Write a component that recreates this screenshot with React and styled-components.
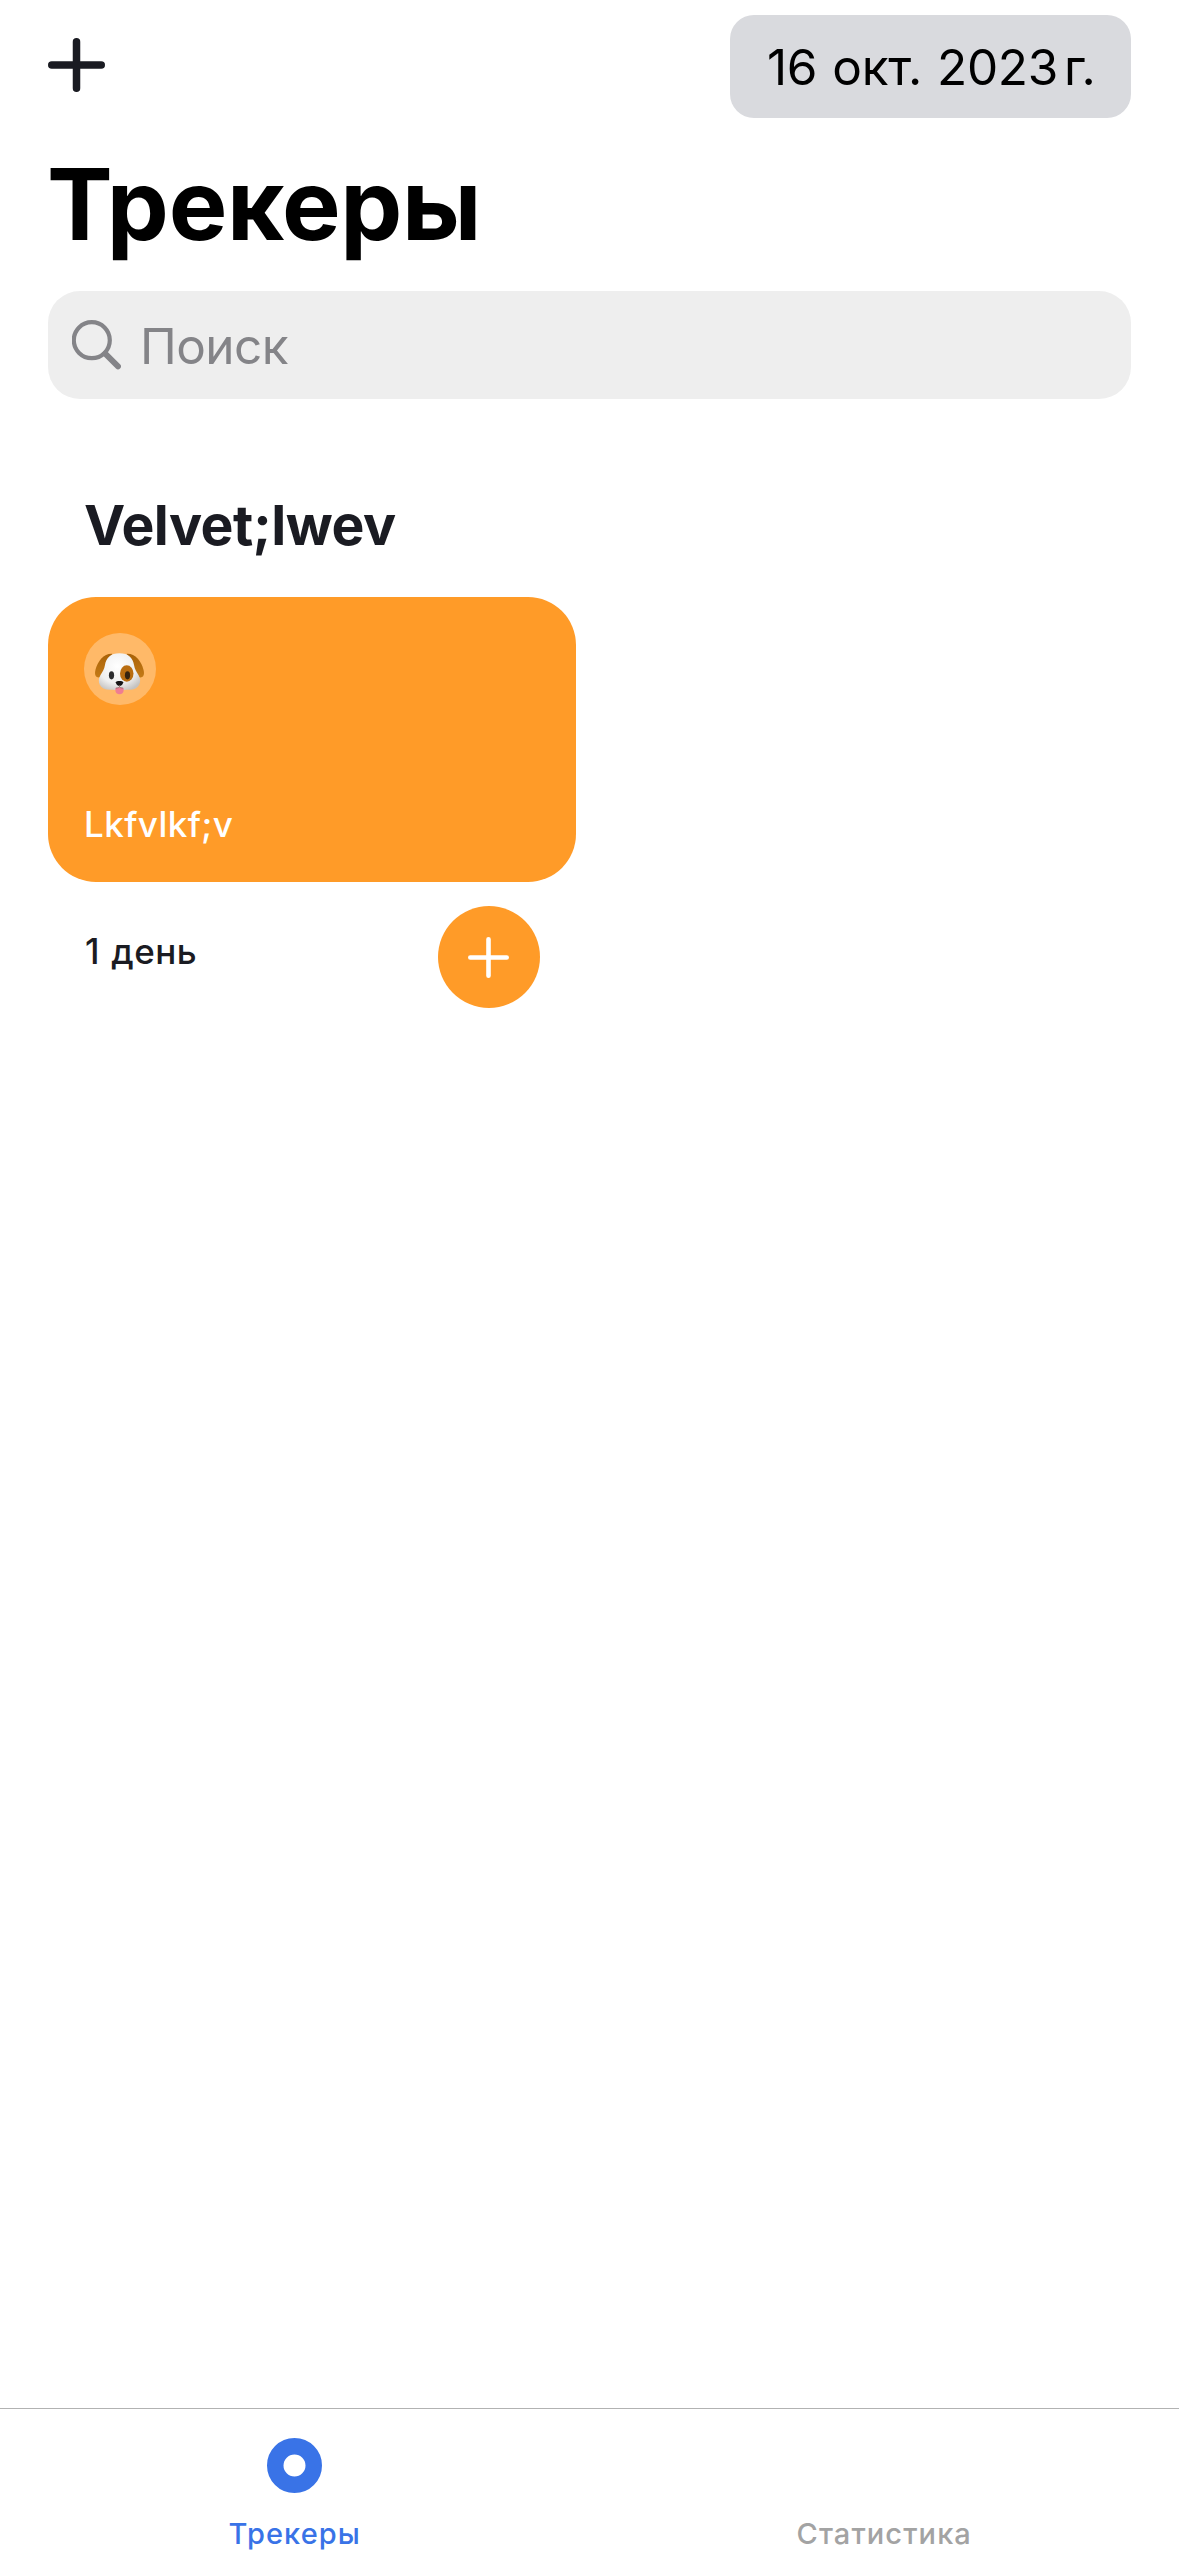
import React from "react";
import styled, { createGlobalStyle } from "styled-components";

const GlobalStyle = createGlobalStyle`
  * { box-sizing: border-box; }
  body { margin: 0; background: #fff; }
  h1, h2, p { margin: 0; }
  button { border: 0; padding: 0; font: inherit; background: none; }
  svg { display: block; }
`;

const Screen = styled.div`
  display: flex;
  flex-direction: column;
  width: 1179px;
  height: 2556px;
  background: #fff;
  color: #1a1b22;
  font-family: Inter, "Liberation Sans", sans-serif;
`;

const Header = styled.header`
  padding: 15px 48px 0;
`;

const Toolbar = styled.div`
  display: flex;
  justify-content: space-between;
  align-items: flex-start;
`;

const AddButton = styled.button`
  padding-top: 23px;
`;

const DatePill = styled.button`
  width: 401px;
  height: 103px;
  padding-left: 37px;
  border-radius: 24px;
  background: #d9dade;
  color: #000;
  font-size: 49.5px;
  letter-spacing: -0.3px;
  word-spacing: 1.5px;
  text-align: left;
  white-space: pre;
`;

const YearUnit = styled.span`
  margin-left: -3px;
  letter-spacing: -0.9px;
`;

const Title = styled.h1`
  margin: 25px 0 24px -1px;
  color: #000;
  font-size: 98.5px;
  font-weight: 700;
  line-height: 124px;
  letter-spacing: -0.3px;
`;

const SearchField = styled.div`
  display: flex;
  align-items: center;
  gap: 19px;
  height: 108px;
  padding-left: 24px;
  border-radius: 32px;
  background: #eeeeee;
  color: #848488;
  font-size: 49.5px;
  line-height: 60px;
  letter-spacing: -0.55px;
`;

const SearchLabel = styled.span`
  padding-top: 1px;
`;

const Content = styled.main`
  flex: 1;
  padding: 93px 48px 0;
`;

const SectionTitle = styled.h2`
  margin-bottom: 39px;
  padding-left: 36px;
  font-size: 55.3px;
  font-weight: 700;
  line-height: 66px;
  letter-spacing: -0.5px;
`;

const Tracker = styled.article`
  width: 528px;
`;

const Card = styled.div`
  display: flex;
  flex-direction: column;
  justify-content: space-between;
  align-items: flex-start;
  height: 285px;
  padding: 36px 36px 31px;
  border-radius: 48px;
  background: ${(p) => p.$color};
`;

const EmojiBadge = styled.div`
  display: flex;
  justify-content: center;
  width: 72px;
  height: 72px;
  padding: 20px 1px 0 0;
  border-radius: 50%;
  background: rgba(255, 255, 255, 0.3);
`;

const CardName = styled.p`
  color: #fff;
  font-size: 35px;
  font-weight: 500;
  line-height: 54px;
  letter-spacing: 0.4px;
`;

const CardFooter = styled.div`
  display: flex;
  justify-content: space-between;
  align-items: flex-start;
  padding: 24px 36px 0 37px;
`;

const DayCount = styled.p`
  padding-top: 18px;
  font-size: 35px;
  font-weight: 500;
  line-height: 54px;
  letter-spacing: 0.45px;
  word-spacing: 1.5px;
`;

const CompleteButton = styled.button`
  display: grid;
  place-items: center;
  width: 102px;
  height: 102px;
  padding-right: 1px;
  border-radius: 50%;
  background: ${(p) => p.$color};
`;

const TabBar = styled.nav`
  display: grid;
  grid-template-columns: 1fr 1fr;
  height: 148px;
  border-top: 1px solid #b2b2b2;
`;

const Tab = styled.div`
  display: flex;
  flex-direction: column;
  align-items: center;
  padding-top: 28.5px;
  color: ${(p) => (p.$active ? "#3973e7" : "#a3a3a3")};
  font-size: 29px;
  font-weight: 500;
  line-height: 36px;
  letter-spacing: 1.1px;
`;

const TabIcon = styled.div`
  height: 78px;
`;

const PlusIcon = ({ width, height = width, stroke, color }) => {
  const x = width / 2;
  const y = height / 2;
  const e = stroke / 2;
  return (
    <svg width={width} height={height} fill="none" stroke={color} strokeWidth={stroke} strokeLinecap="round">
      <path d={`M${x} ${e}V${height - e}M${e} ${y}H${width - e}`} />
    </svg>
  );
};

const SearchIcon = () => (
  <svg width="49" height="50" viewBox="0 0 49 50" fill="none" stroke="#848488" strokeLinecap="round">
    <circle cx="19.8" cy="20.2" r="18" strokeWidth="4.2" />
    <path d="M33.2 33.6L46 46.4" strokeWidth="5.8" />
  </svg>
);

const DogIcon = () => (
  <svg width="49" height="42" viewBox="0.4 0 47.2 42" preserveAspectRatio="none">
    <defs>
      <radialGradient id="fur" cx="0.45" cy="0.35" r="0.7">
        <stop offset="0" stopColor="#ffffff" />
        <stop offset="0.65" stopColor="#efefef" />
        <stop offset="1" stopColor="#c4c2c0" />
      </radialGradient>
      <linearGradient id="ear" x1="0" y1="0" x2="0" y2="1">
        <stop offset="0" stopColor="#a96208" />
        <stop offset="1" stopColor="#c47a16" />
      </linearGradient>
    </defs>
    <path d="M17 .7C9 .3 3 8 .8 17C-.2 21.5.8 24.5 3.6 24.5C8 24.5 11 20 13 14Z" fill="url(#ear)" />
    <path d="M31 .7C39 .3 45 8 47.2 17C48.2 21.5 47.2 24.5 44.4 24.5C40 24.5 37 20 35 14Z" fill="url(#ear)" />
    <path d="M24 .3C15.5 .3 11 5 10 12C9.4 16.5 7.5 19 5.7 22C2 28.5 4.5 36.8 15 36.8C18.5 36.8 20.5 37.5 24 37.5C27.5 37.5 29.5 36.8 33 36.8C43.5 36.8 46 28.5 42.3 22C40.5 19 38.6 16.5 38 12C37 5 32.5 .3 24 .3Z" fill="url(#fur)" />
    <ellipse cx="31" cy="20.5" rx="6.5" ry="8.3" fill="#b96d10" />
    <ellipse cx="16.3" cy="22.3" rx="2.5" ry="4.1" fill="#2b2b2d" />
    <ellipse cx="31.7" cy="22.3" rx="2.5" ry="4.1" fill="#35230f" />
    <path d="M20 35.2C22 34.2 26 34.2 28 35.2V37C28 40 26.2 41.3 24 41.3C21.8 41.3 20 40 20 37Z" fill="#ef7d92" />
    <path d="M20.5 29.3C20.5 27.4 27.5 27.4 27.5 29.3C27.5 31.5 25.5 33 24 33C22.5 33 20.5 31.5 20.5 29.3Z" fill="#151515" />
    <path d="M24 32V34.2M20.5 35.1C22.3 35 23.4 34.7 24 34C24.6 34.7 25.7 35 27.5 35.1" stroke="#8a6a68" strokeWidth="0.8" fill="none" />
  </svg>
);

const TrackersIcon = () => (
  <svg width="55" height="55" viewBox="0 0 55 55">
    <circle cx="27.5" cy="27.5" r="19.25" fill="none" stroke="currentColor" strokeWidth="16.5" />
  </svg>
);

const trackers = [{ name: "Lkfvlkf;v", days: "1 день", color: "#ff9b28" }];

export default function App() {
  return (
    <Screen>
      <GlobalStyle />
      <Header>
        <Toolbar>
          <AddButton aria-label="Добавить">
            <PlusIcon width={57} height={54} stroke={7.5} color="#1a1b22" />
          </AddButton>
          <DatePill>16 окт. 2023{"\u202f"}<YearUnit>г.</YearUnit></DatePill>
        </Toolbar>
        <Title>Трекеры</Title>
        <SearchField>
          <SearchIcon />
          <SearchLabel>Поиск</SearchLabel>
        </SearchField>
      </Header>
      <Content>
        <SectionTitle>Velvet;lwev</SectionTitle>
        {trackers.map((t) => (
          <Tracker key={t.name}>
            <Card $color={t.color}>
              <EmojiBadge>
                <DogIcon />
              </EmojiBadge>
              <CardName>{t.name}</CardName>
            </Card>
            <CardFooter>
              <DayCount>{t.days}</DayCount>
              <CompleteButton $color={t.color} aria-label="Отметить">
                <PlusIcon width={41} stroke={4.6} color="#fff" />
              </CompleteButton>
            </CardFooter>
          </Tracker>
        ))}
      </Content>
      <TabBar>
        <Tab $active>
          <TabIcon>
            <TrackersIcon />
          </TabIcon>
          Трекеры
        </Tab>
        <Tab>
          <TabIcon />
          Статистика
        </Tab>
      </TabBar>
    </Screen>
  );
}
